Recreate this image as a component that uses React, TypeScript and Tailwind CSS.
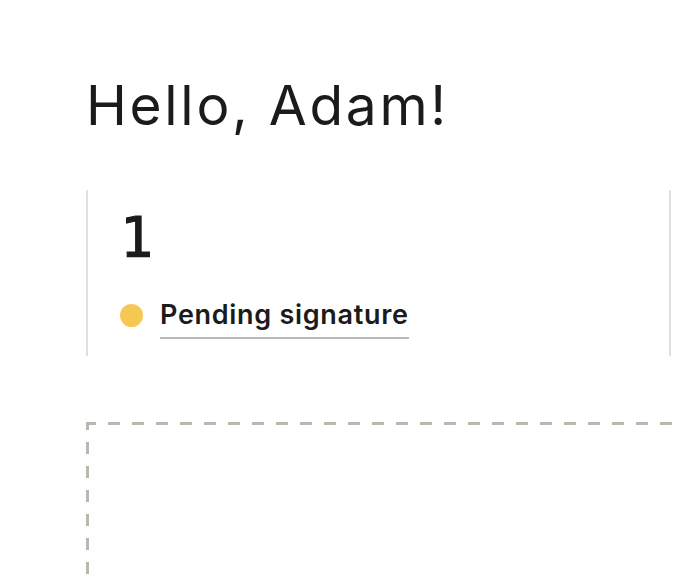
import React from "react";

export default function App() {
  return (
    <div className="w-full h-[586px] overflow-hidden bg-white text-[#1b1b1b]">
      <div className="pl-[86px] pt-[78px]">
        <h1 className="font-['Inter',sans-serif] text-[55px] font-normal leading-none tracking-[2.7px] whitespace-nowrap">
          Hello, Adam!
        </h1>

        <div className="mt-[57px] w-[585px] border-x-2 border-[#e0e0e0] pl-[32px] pt-[20px] pb-[17px]">
          <div className="font-['DejaVu_Sans_Mono',monospace] text-[55px] leading-none [-webkit-text-stroke:1.2px_#1b1b1b]">1</div>
          <div className="mt-[33px] flex items-start">
            <span className="mt-[6px] h-[23px] w-[23px] shrink-0 rounded-full bg-[#f6c853]" />
            <span className="ml-[17px] inline-block border-b-2 border-[#bdb9b0] pb-[6px] font-['Inter',sans-serif] text-[27px] font-semibold leading-[33px] tracking-[0.7px]">
              Pending signature
            </span>
          </div>
        </div>

        <div className="mt-[66px] h-[240px] w-[640px] [background:linear-gradient(90deg,#bcb7ae_50%,transparent_50%)_-2px_0/24px_3px_repeat-x,linear-gradient(180deg,#bcb7ae_50%,transparent_50%)_0_-4px/3px_24px_repeat-y]" />
      </div>
    </div>
  );
}
